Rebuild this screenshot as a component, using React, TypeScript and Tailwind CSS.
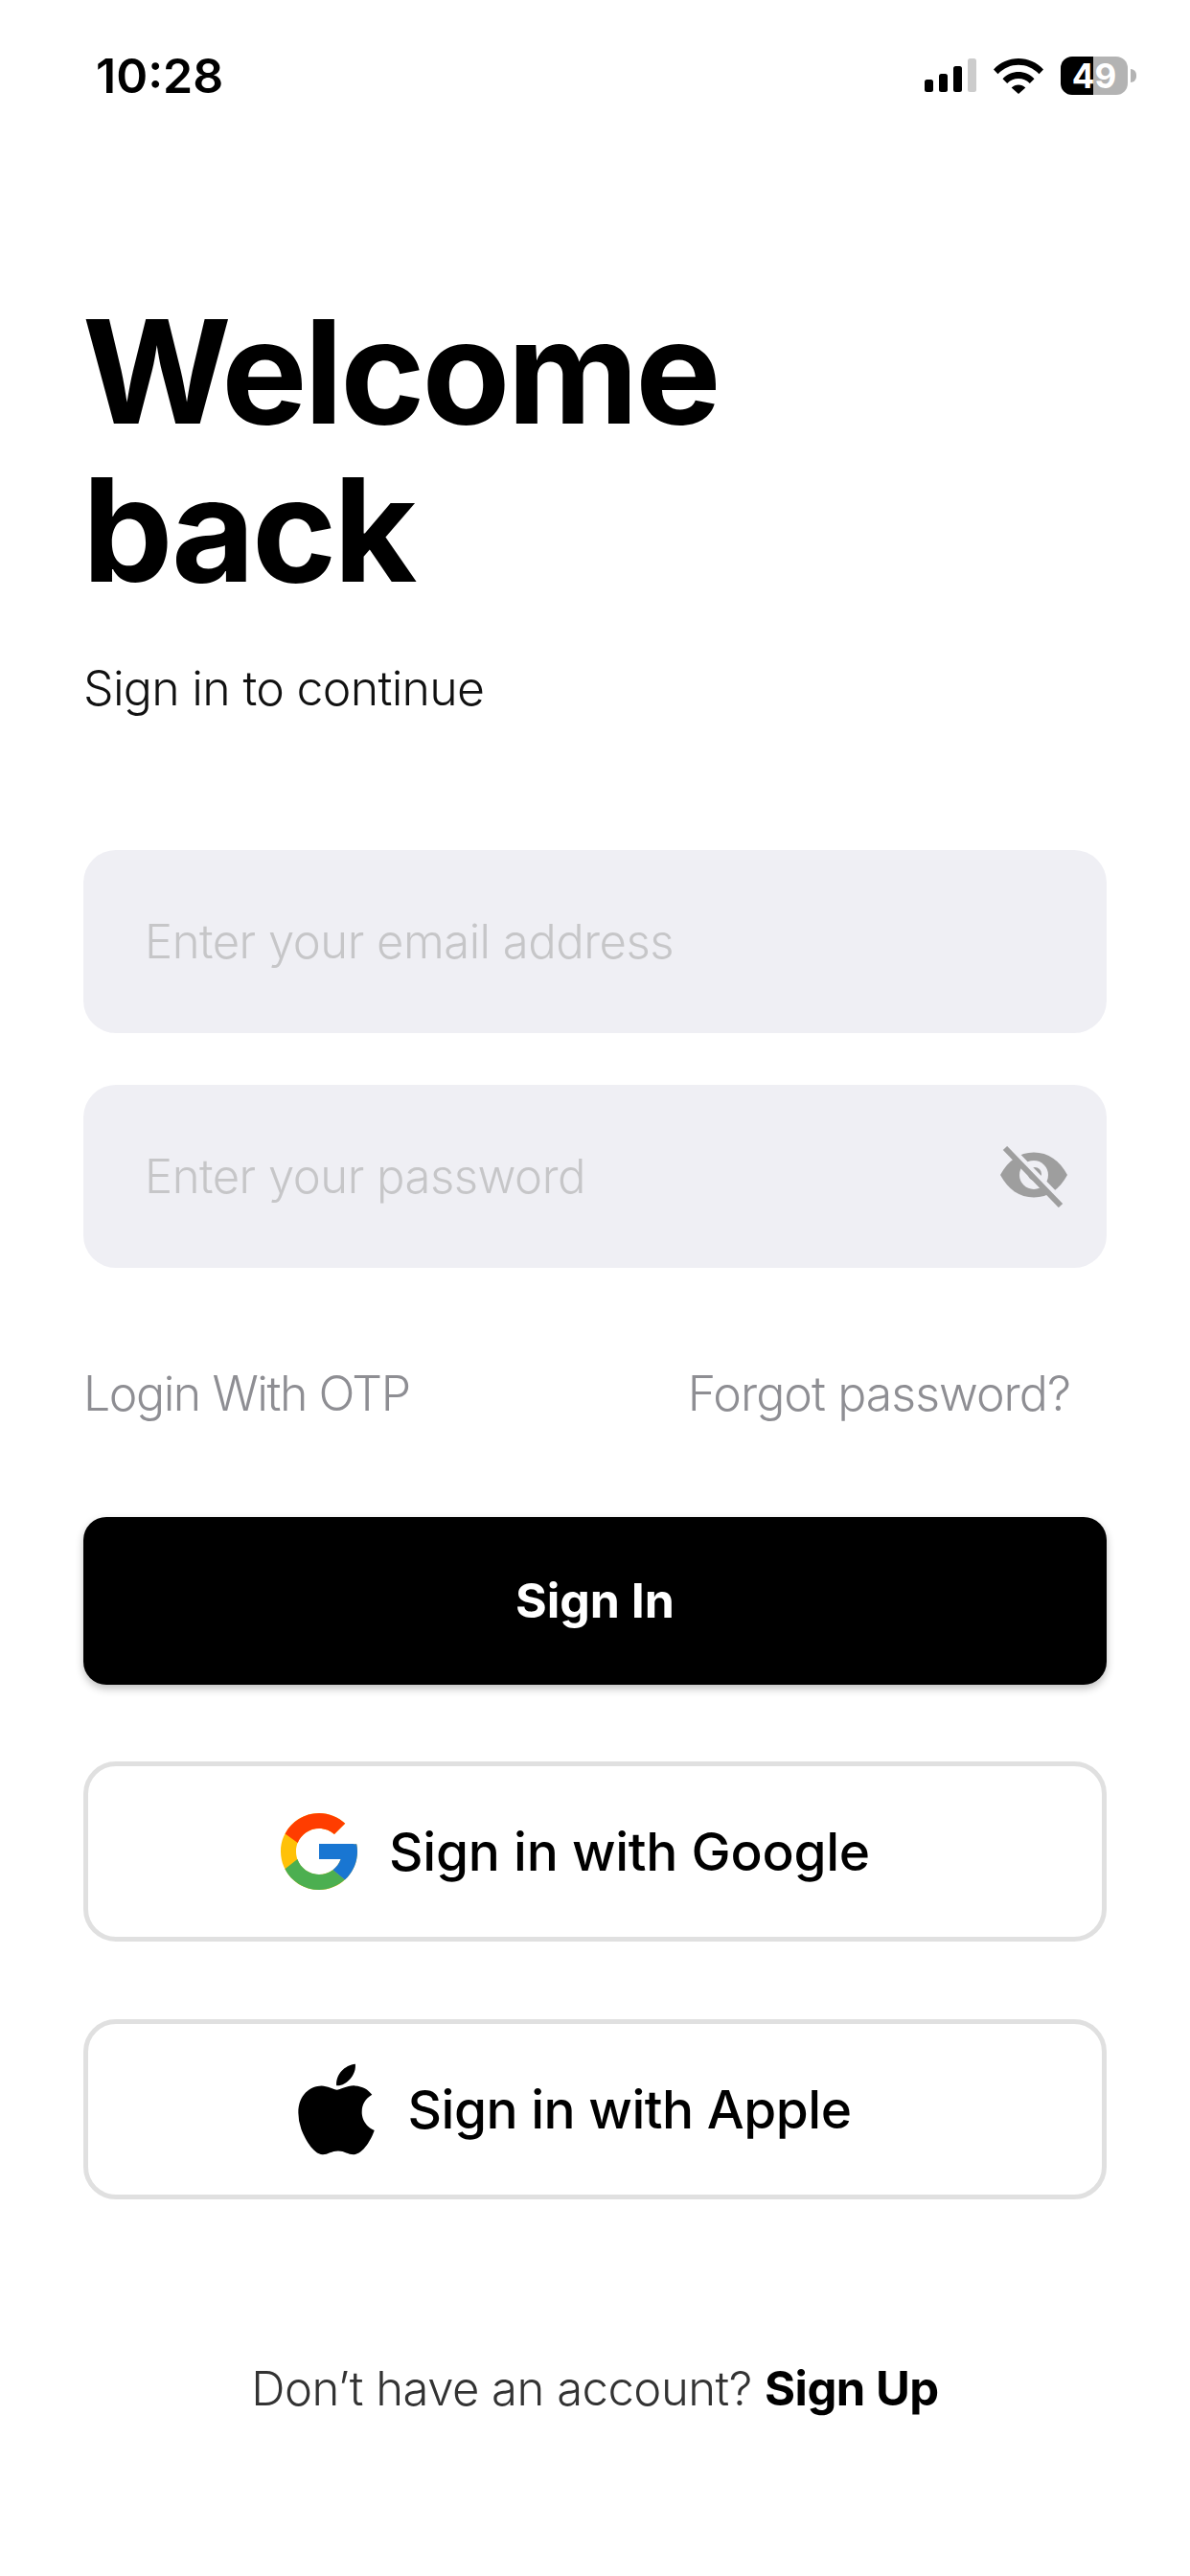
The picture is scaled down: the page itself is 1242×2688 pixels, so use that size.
import React from 'react';
import { FcGoogle } from 'react-icons/fc';
import { FaApple } from 'react-icons/fa';

const SignalIcon = () => (
  <svg width="54" height="36" viewBox="0 0 54 36" className="block">
    <rect x="0" y="22" width="9" height="13" rx="2.5" fill="#000" />
    <rect x="15" y="16" width="9" height="19" rx="2.5" fill="#000" />
    <rect x="30" y="8" width="9" height="27" rx="2.5" fill="#000" />
    <rect x="45" y="0" width="9" height="35" rx="2.5" fill="#ccc" />
  </svg>
);

const WifiIcon = () => (
  <svg width="52" height="38" viewBox="0 0 52 38" className="block">
    <path d="M0 12.5C7 5 16 1 26 1s19 4 26 11.5l-4.5 4.7C41.5 11 34 7.7 26 7.7S10.500 11 4.500 17.200z" fill="#000" />
    <path d="M9.500 22.200C14 17.500 20 15 26 15s12 2.500 16.500 7.200l-4.700 4.700C34.500 23.600 30.500 22 26 22s-8.500 1.600-11.800 4.900z" fill="#000" />
    <path d="M18.700 31.500C20.700 29.600 23.200 28.600 26 28.600s5.300 1 7.300 2.900L26 38z" fill="#000" />
  </svg>
);

const EyeOffIcon = () => (
  <svg width="72" height="64" viewBox="0 0 72 64" className="block">
    <path d="M1 30C9 15 21 6.500 36 6.500s27 8.500 35 23.500c-8 15-20 23.500-35 23.500S9 45 1 30z" fill="#9e9e9e" />
    <circle cx="36" cy="30" r="15" fill="#efeff4" />
    <circle cx="37" cy="29" r="7" fill="#9e9e9e" />
    <path d="M9 0l58 60" stroke="#efeff4" strokeWidth="7" />
    <path d="M6 2l58 60" stroke="#9e9e9e" strokeWidth="6" />
  </svg>
);

const Field: React.FC<{ placeholder: string; icon?: React.ReactNode }> = ({ placeholder, icon }) => (
  <div className="flex items-center h-[191px] rounded-[34px] bg-[#efeff4] pl-[64px] pr-[40px]">
    <input
      placeholder={placeholder}
      className="flex-1 min-w-0 bg-transparent outline-none text-[49px] font-light tracking-[-0.5px] placeholder:text-[#c6c6c8]"
    />
    {icon}
  </div>
);

const OutlineButton: React.FC<{ label: string; layout: string; icon: React.ReactNode }> = ({ label, layout, icon }) => (
  <button className={`flex items-center justify-center ${layout} h-[188px] rounded-[34px] border-[5px] border-[#e0e0e0] bg-white text-[55px] font-medium text-black`}>
    {icon}
    <span>{label}</span>
  </button>
);

const App: React.FC = () => {
  return (
    <div className="w-[1242px] h-[2688px] bg-white text-black font-['Inter','Liberation_Sans',sans-serif] overflow-hidden">
      <div className="flex items-center justify-between h-[78px] mt-[40px] pl-[100px] pr-[56px]">
        <span className="text-[50px] font-semibold leading-none">10:28</span>
        <div className="flex items-center">
          <SignalIcon />
          <div className="ml-[18px]"><WifiIcon /></div>
          <div className="ml-[18px] w-[70px] h-[40px] rounded-[12px] flex items-center justify-center text-[35px] font-bold leading-none text-white bg-[linear-gradient(90deg,#000_49%,#b3b3b3_49%)]">
            49
          </div>
          <div className="ml-[3px] w-[6px] h-[14px] rounded-r-full bg-[#b3b3b3]" />
        </div>
      </div>

      <div className="px-[87px]">
        <h1 className="mt-[187px] -ml-[1px] text-[150px] leading-[165px] font-bold tracking-[-3px]">
          Welcome
          <br />
          back
        </h1>
        <p className="mt-[53px] text-[50px] leading-[60px] font-light tracking-[-0.7px] text-[#111]">Sign in to continue</p>

        <div className="mt-[139px] flex flex-col gap-[54px]">
          <Field placeholder="Enter your email address" />
          <Field placeholder="Enter your password" icon={<EyeOffIcon />} />
        </div>

        <div className="mt-[101px] flex items-center justify-between pr-[38px] text-[50px] leading-[60px] font-light text-[#8e8e93]">
          <span className="tracking-[-1.45px]">Login With OTP</span>
          <span className="tracking-[-0.95px]">Forgot password?</span>
        </div>

        <button className="mt-[99px] w-full h-[175px] rounded-[24px] bg-black text-white text-[50px] font-bold shadow-[0_4px_8px_rgba(0,0,0,0.25)]">
          Sign In
        </button>

        <div className="mt-[80px] flex flex-col gap-[81px]">
          <OutlineButton label="Sign in with Google" layout="gap-[25px] pr-[49px] tracking-[-0.25px]" icon={<FcGoogle size={96} />} />
          <OutlineButton label="Sign in with Apple" layout="gap-[21px] pr-[57px] tracking-[-0.5px]" icon={<FaApple size={108} />} />
        </div>

        <p className="mt-[168px] text-center text-[49px] leading-[60px] font-light tracking-[-0.5px] text-[#333]">
          Don’t have an account? <span className="font-bold text-black">Sign Up</span>
        </p>
      </div>
    </div>
  );
};

export default App;
